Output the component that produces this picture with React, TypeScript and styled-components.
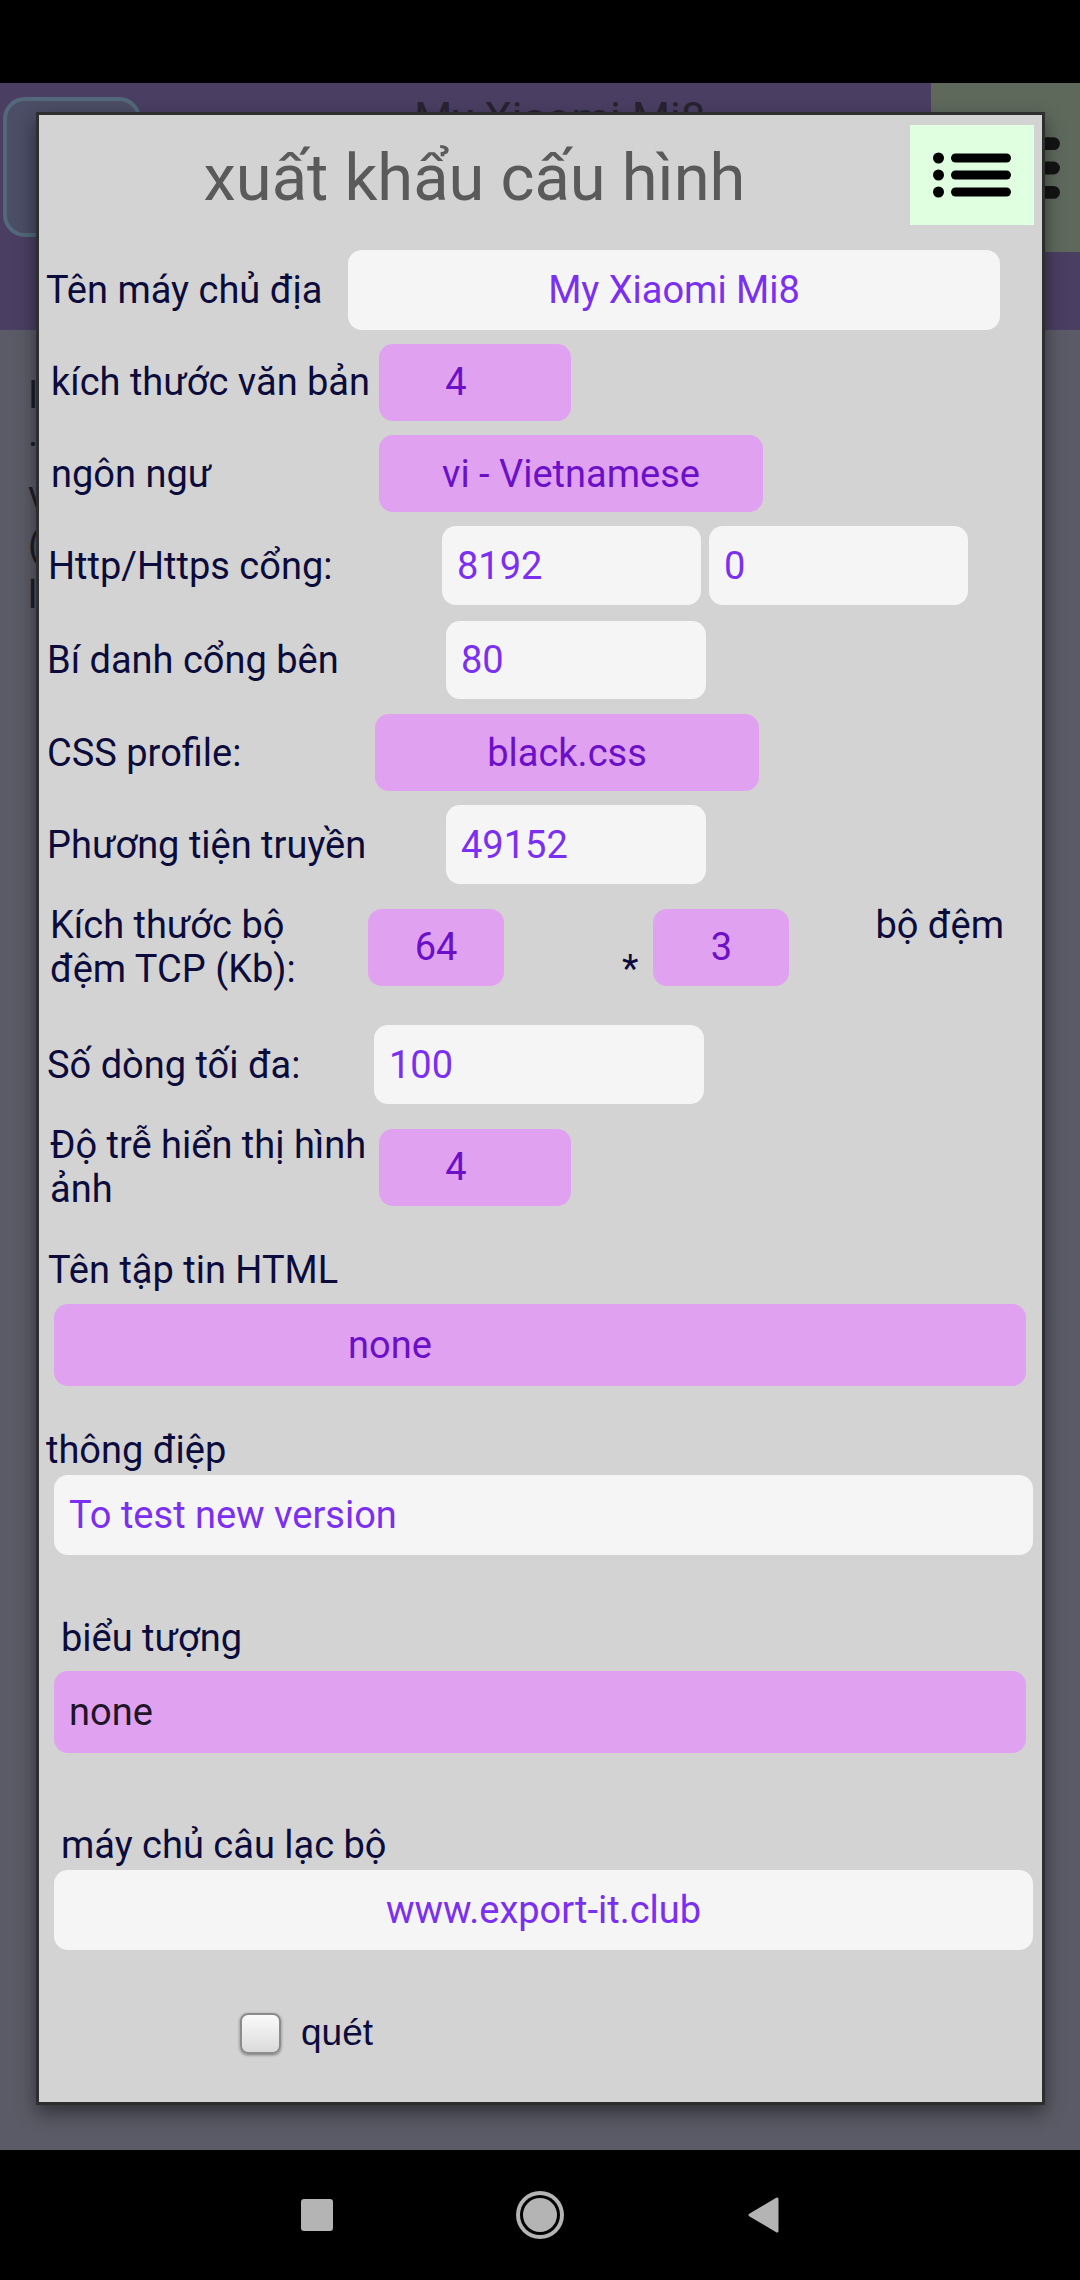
import styled, { createGlobalStyle } from "styled-components";

const GlobalStyle = createGlobalStyle`
  html, body {
    margin: 0;
    padding: 0;
  }
  body {
    width: 1080px;
    height: 2280px;
    overflow: hidden;
    background: #000;
    font-family: Roboto, "Noto Sans", sans-serif;
  }
`;

const Screen = styled.div`
  position: relative;
  width: 1080px;
  height: 2280px;
  display: flex;
  flex-direction: column;
  background: #5a5b66;
  overflow: hidden;
`;

const StatusBar = styled.div`
  flex: none;
  height: 83px;
  background: #000;
`;

const AppHeader = styled.div`
  flex: none;
  height: 247px;
  display: flex;
  align-items: flex-start;
  padding-left: 3px;
  background: #4a3f63;
`;

const AppLogo = styled.div`
  flex: none;
  width: 138px;
  height: 140px;
  margin-top: 14px;
  box-sizing: border-box;
  border: 4px solid #53687a;
  border-radius: 22px;
  background: #4c4d66;
`;

const AppTitle = styled.div`
  flex: 1;
  padding: 10px 0 0 273px;
  font-size: 44px;
  color: #28232f;
  white-space: nowrap;
`;

const AppMenu = styled.div`
  flex: none;
  width: 149px;
  height: 169px;
  display: flex;
  align-items: center;
  justify-content: flex-end;
  padding-right: 20px;
  box-sizing: border-box;
  background: #5e695c;
`;

const Body = styled.div`
  flex: 1;
  padding: 40px 0 0 28px;
  font-size: 38px;
  line-height: 50px;
  color: #1e1e26;
`;

const NavBar = styled.div`
  flex: none;
  height: 130px;
  display: flex;
  align-items: center;
  justify-content: center;
  gap: 182px;
  background: #000;
`;

const NavSquare = styled.div`
  width: 32px;
  height: 32px;
  border-radius: 3px;
  background: #b4b4b4;
`;

/* dialog lying over the page */
const Dialog = styled.div`
  position: absolute;
  left: 36px;
  top: 112px;
  width: 1009px;
  height: 1993px;
  box-sizing: border-box;
  border: 3px solid #2e2e2e;
  background: #d3d3d3;
  box-shadow: 0 8px 18px rgba(0, 0, 0, 0.45);
  display: flex;
  flex-direction: column;
`;

const DialogHeader = styled.div`
  display: flex;
  align-items: center;
  height: 110px;
  box-sizing: border-box;
  padding: 10px 8px 0 0;
`;

const DialogTitle = styled.h1`
  flex: 1;
  margin: 0;
  padding-top: 6px;
  text-align: center;
  font-size: 65px;
  font-weight: 400;
  line-height: 75px;
  color: #5a5a5a;
  white-space: nowrap;
`;

const MenuButton = styled.button`
  flex: none;
  width: 124px;
  height: 100px;
  display: flex;
  align-items: center;
  justify-content: center;
  border: none;
  padding: 0;
  background: #e0ffe0;
`;

const Row = styled.div<{ $top: number; $h: number; $indent: number }>`
  display: flex;
  align-items: center;
  height: ${(p) => p.$h}px;
  margin-top: ${(p) => p.$top}px;
  padding-left: ${(p) => p.$indent}px;
`;

const Label = styled.span<{ $w?: number; $wrap?: boolean; $gap?: number }>`
  flex: none;
  width: ${(p) => (p.$w ? `${p.$w}px` : "auto")};
  margin-right: ${(p) => p.$gap ?? 0}px;
  font-size: 38px;
  line-height: 44px;
  color: #0c0c3c;
  white-space: ${(p) => (p.$wrap ? "normal" : "nowrap")};
`;

const BlockLabel = styled.div<{ $top: number; $indent: number }>`
  margin-top: ${(p) => p.$top}px;
  padding-left: ${(p) => p.$indent}px;
  font-size: 38px;
  line-height: 44px;
  color: #0c0c3c;
`;

const Field = styled.input<{ $w?: number; $h?: number; $align?: string; $ml?: number }>`
  flex: none;
  width: ${(p) => (p.$w ? `${p.$w}px` : "auto")};
  height: ${(p) => p.$h ?? 79}px;
  margin-left: ${(p) => p.$ml ?? 0}px;
  box-sizing: border-box;
  padding: 0 15px;
  border: none;
  border-radius: 14px;
  background: #f5f5f5;
  font-family: Roboto, "Noto Sans", sans-serif;
  font-size: 38px;
  color: #7b2ff0;
  text-align: ${(p) => p.$align ?? "left"};
  outline: none;
`;

const WideField = styled(Field)`
  display: block;
  margin: 3px 9px 0 15px;
  width: auto;
`;

const Picker = styled.select<{ $w?: number; $shift?: number; $ml?: number; $dark?: boolean; $left?: boolean }>`
  flex: none;
  width: ${(p) => (p.$w ? `${p.$w}px` : "auto")};
  height: 77px;
  margin-left: ${(p) => p.$ml ?? 0}px;
  box-sizing: border-box;
  padding: 0 ${(p) => p.$shift ?? 0}px 0 ${(p) => (p.$left ? 15 : 0)}px;
  border: none;
  border-radius: 14px;
  background: #e0a2f0;
  appearance: none;
  -webkit-appearance: none;
  font-family: Roboto, "Noto Sans", sans-serif;
  font-size: 38px;
  color: ${(p) => (p.$dark ? "#1e1628" : "#6b10c8")};
  text-align: ${(p) => (p.$left ? "left" : "center")};
  text-align-last: ${(p) => (p.$left ? "left" : "center")};
  outline: none;
`;

const WidePicker = styled(Picker)`
  display: block;
  width: auto;
  height: 82px;
  margin: 0 16px 0 15px;
`;

const Star = styled.span`
  align-self: flex-end;
  margin-left: 118px;
  font-size: 38px;
  line-height: 44px;
  color: #0c0c3c;
`;

const Unit = styled.span`
  align-self: flex-start;
  margin-left: 86px;
  font-size: 38px;
  line-height: 44px;
  color: #0c0c3c;
  white-space: nowrap;
`;

const CheckRow = styled.label`
  display: flex;
  align-items: center;
  margin-top: 62px;
  padding-left: 201px;
`;

const Check = styled.input`
  appearance: none;
  -webkit-appearance: none;
  margin: 0;
  width: 41px;
  height: 41px;
  box-sizing: border-box;
  border: 2px solid #8c8c8c;
  border-radius: 8px;
  background: linear-gradient(#fbfbfb, #dadada);
  box-shadow: 0 1px 3px rgba(0, 0, 0, 0.45);
`;

const CheckText = styled.span`
  margin-left: 20px;
  font-family: "Liberation Sans", Arial, sans-serif;
  font-size: 37px;
  color: #0c0c3c;
`;

const ListIcon = ({ w, h, color }: { w: number; h: number; color: string }) => (
  <svg width={w} height={h} viewBox="0 0 78 46">
    {[6, 23, 40].map((y) => (
      <g key={y}>
        <circle cx="5.5" cy={y} r="5.5" fill={color} />
        <rect x="18" y={y - 4.5} width="60" height="9" rx="4.5" fill={color} />
      </g>
    ))}
  </svg>
);

export default function App() {
  return (
    <Screen>
      <GlobalStyle />
      <StatusBar />
      <AppHeader>
        <AppLogo />
        <AppTitle>My Xiaomi Mi8</AppTitle>
        <AppMenu>
          <ListIcon w={112} h={66} color="#141414" />
        </AppMenu>
      </AppHeader>
      {/* page text mostly hidden under the dialog */}
      <Body>
        <div>I</div>
        <div>·</div>
        <div>v</div>
        <div>(</div>
        <div>l</div>
      </Body>
      <NavBar>
        <NavSquare />
        <svg width="50" height="50" viewBox="0 0 50 50">
          <circle cx="25" cy="25" r="24" fill="#b4b4b4" />
          <circle cx="25" cy="25" r="20" fill="#000" />
          <circle cx="25" cy="25" r="17" fill="#b4b4b4" />
        </svg>
        <svg width="32" height="38" viewBox="0 0 32 38">
          <polygon
            points="3,19 30,3 30,35"
            fill="#b4b4b4"
            stroke="#b4b4b4"
            strokeWidth="3"
            strokeLinejoin="round"
          />
        </svg>
      </NavBar>

      <Dialog>
        <DialogHeader>
          <DialogTitle>xuất khẩu cấu hình</DialogTitle>
          <MenuButton>
            <ListIcon w={78} h={46} color="#000" />
          </MenuButton>
        </DialogHeader>

        <Row $top={25} $h={80} $indent={7}>
          <Label $w={302}>Tên máy chủ địa</Label>
          <Field $w={652} $h={80} $align="center" readOnly value="My Xiaomi Mi8" />
        </Row>
        <Row $top={14} $h={76} $indent={12}>
          <Label $w={328}>kích thước văn bản</Label>
          <Picker $w={192} $shift={38} defaultValue="4">
            <option>4</option>
          </Picker>
        </Row>
        <Row $top={15} $h={77} $indent={12}>
          <Label $w={328}>ngôn ngư</Label>
          <Picker $w={384} defaultValue="vi - Vietnamese">
            <option>vi - Vietnamese</option>
          </Picker>
        </Row>
        <Row $top={14} $h={79} $indent={9}>
          <Label $w={394}>Http/Https cổng:</Label>
          <Field $w={259} readOnly value="8192" />
          <Field $w={259} $ml={8} readOnly value="0" />
        </Row>
        <Row $top={16} $h={78} $indent={8}>
          <Label $w={399}>Bí danh cổng bên</Label>
          <Field $w={260} $h={78} readOnly value="80" />
        </Row>
        <Row $top={15} $h={77} $indent={8}>
          <Label $w={328}>CSS profile:</Label>
          <Picker $w={384} defaultValue="black.css">
            <option>black.css</option>
          </Picker>
        </Row>
        <Row $top={14} $h={79} $indent={8}>
          <Label $w={399}>Phương tiện truyền</Label>
          <Field $w={260} readOnly value="49152" />
        </Row>
        <Row $top={19} $h={88} $indent={11}>
          <Label $w={290} $gap={28} $wrap>
            Kích thước bộ đệm TCP (Kb):
          </Label>
          <Picker $w={136} defaultValue="64">
            <option>64</option>
          </Picker>
          <Star>*</Star>
          <Picker $w={136} $ml={15} defaultValue="3">
            <option>3</option>
          </Picker>
          <Unit>bộ đệm</Unit>
        </Row>
        <Row $top={34} $h={79} $indent={8}>
          <Label $w={327}>Số dòng tối đa:</Label>
          <Field $w={330} readOnly value="100" />
        </Row>
        <Row $top={19} $h={88} $indent={11}>
          <Label $w={322} $gap={7} $wrap>
            Độ trễ hiển thị hình ảnh
          </Label>
          <Picker $w={192} $shift={38} defaultValue="4">
            <option>4</option>
          </Picker>
        </Row>

        <BlockLabel $top={37} $indent={9}>
          Tên tập tin HTML
        </BlockLabel>
        <WidePicker $shift={300} style={{ marginTop: 12 }} defaultValue="none">
          <option>none</option>
        </WidePicker>

        <BlockLabel $top={42} $indent={7}>
          thông điệp
        </BlockLabel>
        <WideField $h={80} readOnly value="To test new version" />

        <BlockLabel $top={61} $indent={22}>
          biểu tượng
        </BlockLabel>
        <WidePicker $left $dark style={{ marginTop: 11 }} defaultValue="none">
          <option>none</option>
        </WidePicker>

        <BlockLabel $top={70} $indent={22}>
          máy chủ câu lạc bộ
        </BlockLabel>
        <WideField $h={80} $align="center" readOnly value="www.export-it.club" />

        <CheckRow>
          <Check type="checkbox" />
          <CheckText>quét</CheckText>
        </CheckRow>
      </Dialog>
    </Screen>
  );
}
